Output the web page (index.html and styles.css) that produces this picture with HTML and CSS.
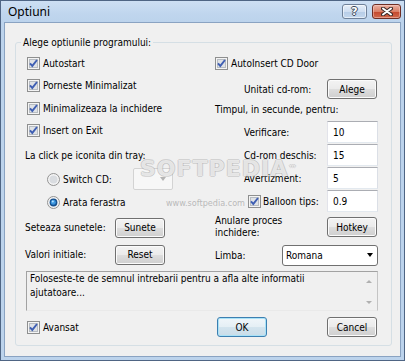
FILE: index.html
```html
<!DOCTYPE html>
<html>
<head>
<meta charset="utf-8">
<link rel="stylesheet" href="styles.css">
</head>
<body>
<div class="window">
  <div class="titlebar">
    <span class="title">Optiuni</span>
    <div class="tb-buttons">
      <div class="tb-btn help">?</div>
      <div class="tb-btn close">
        <svg width="12" height="9" viewBox="0 0 12 9"><path d="M2 1.5 L10 7.5 M10 1.5 L2 7.5" stroke="#3b2a28" stroke-width="4" stroke-linecap="round"/><path d="M2 1.5 L10 7.5 M10 1.5 L2 7.5" stroke="#ffffff" stroke-width="2" stroke-linecap="round"/></svg>
      </div>
    </div>
  </div>
  <div class="client">
    <fieldset class="group">
      <legend>Alege optiunile programului:</legend>
      <div class="cols">
        <div class="col">
          <div class="row"><span class="check ind2"><svg class="cb" viewBox="0 0 13 13"><rect x="0.5" y="0.5" width="12" height="12" fill="#f4f4f4" stroke="#8e8f8f"/><rect x="2.5" y="2.5" width="8" height="8" fill="#dfe2e6" stroke="#b7bcc2"/><path d="M3 6.3 L5.3 8.9 L10 3" fill="none" stroke="#3f5fb3" stroke-width="1.9"/></svg>Autostart</span></div>
          <div class="row"><span class="check ind2"><svg class="cb" viewBox="0 0 13 13"><rect x="0.5" y="0.5" width="12" height="12" fill="#f4f4f4" stroke="#8e8f8f"/><rect x="2.5" y="2.5" width="8" height="8" fill="#dfe2e6" stroke="#b7bcc2"/><path d="M3 6.3 L5.3 8.9 L10 3" fill="none" stroke="#3f5fb3" stroke-width="1.9"/></svg>Porneste Minimalizat</span></div>
          <div class="row"><span class="check ind2"><svg class="cb" viewBox="0 0 13 13"><rect x="0.5" y="0.5" width="12" height="12" fill="#f4f4f4" stroke="#8e8f8f"/><rect x="2.5" y="2.5" width="8" height="8" fill="#dfe2e6" stroke="#b7bcc2"/><path d="M3 6.3 L5.3 8.9 L10 3" fill="none" stroke="#3f5fb3" stroke-width="1.9"/></svg>Minimalizeaza la inchidere</span></div>
          <div class="row"><span class="check ind2"><svg class="cb" viewBox="0 0 13 13"><rect x="0.5" y="0.5" width="12" height="12" fill="#f4f4f4" stroke="#8e8f8f"/><rect x="2.5" y="2.5" width="8" height="8" fill="#dfe2e6" stroke="#b7bcc2"/><path d="M3 6.3 L5.3 8.9 L10 3" fill="none" stroke="#3f5fb3" stroke-width="1.9"/></svg>Insert on Exit</span></div>
          <div class="row sp2">La click pe iconita din tray:</div>
          <div class="row h25">
            <span class="radio-label"><svg class="rb" viewBox="0 0 13 13"><circle cx="6.5" cy="6.5" r="6" fill="#f3f3f3" stroke="#929292"/><circle cx="6.5" cy="6.5" r="4" fill="#d9dce0"/></svg>Switch CD:</span>
            <span class="combo-dis"><span class="combo-dis-arrow"></span></span>
          </div>
          <div class="row">
            <span class="radio-label"><svg class="rb" viewBox="0 0 13 13"><circle cx="6.5" cy="6.5" r="6" fill="#f3f3f3" stroke="#929292"/><circle cx="6.5" cy="6.5" r="3.9" fill="#15508f"/><circle cx="6.3" cy="6.2" r="2.5" fill="#3d97e0"/><circle cx="5.8" cy="5.6" r="1" fill="#b9e3ff"/></svg>Arata ferastra</span>
          </div>
          <div class="row h27"><span class="lbl-l">Seteaza sunetele:</span><span class="btn">Sunete</span></div>
          <div class="row h27"><span class="lbl-l">Valori initiale:</span><span class="btn">Reset</span></div>
        </div>
        <div class="col">
          <div class="row"><span class="check"><svg class="cb" viewBox="0 0 13 13"><rect x="0.5" y="0.5" width="12" height="12" fill="#f4f4f4" stroke="#8e8f8f"/><rect x="2.5" y="2.5" width="8" height="8" fill="#dfe2e6" stroke="#b7bcc2"/><path d="M3 6.3 L5.3 8.9 L10 3" fill="none" stroke="#3f5fb3" stroke-width="1.9"/></svg>AutoInsert CD Door</span></div>
          <div class="row h25 sp2"><span class="lbl-r">Unitati cd-rom:</span><span class="btn">Alege</span></div>
          <div class="row h16">Timpul, in secunde, pentru:</div>
          <div class="row h23 sp3"><span class="lbl-r">Verificare:</span><span class="edit">10</span></div>
          <div class="row h23"><span class="lbl-r">Cd-rom deschis:</span><span class="edit">15</span></div>
          <div class="row h23"><span class="lbl-r">Avertizment:</span><span class="edit">5</span></div>
          <div class="row h23"><span class="lbl-r balloon"><svg class="cb" viewBox="0 0 13 13"><rect x="0.5" y="0.5" width="12" height="12" fill="#f4f4f4" stroke="#8e8f8f"/><rect x="2.5" y="2.5" width="8" height="8" fill="#dfe2e6" stroke="#b7bcc2"/><path d="M3 6.3 L5.3 8.9 L10 3" fill="none" stroke="#3f5fb3" stroke-width="1.9"/></svg>Balloon tips:</span><span class="edit">0.9</span></div>
          <div class="row h29"><span class="lbl-two">Anulare proces<br>inchidere:</span><span class="btn">Hotkey</span></div>
          <div class="row h27"><span class="lbl-limba">Limba:</span><span class="combo"><span>Romana</span><span class="combo-arrow"></span></span></div>
        </div>
      </div>
      <div class="memo">
        <div class="memo-text">Foloseste-te de semnul intrebarii pentru a afla alte informatii ajutatoare...</div>
        <div class="memo-scroll"><span class="arr-up"></span><span class="arr-down"></span></div>
      </div>
      <div class="bottom">
        <span class="check ind2 bottom-check"><svg class="cb" viewBox="0 0 13 13"><rect x="0.5" y="0.5" width="12" height="12" fill="#f4f4f4" stroke="#8e8f8f"/><rect x="2.5" y="2.5" width="8" height="8" fill="#dfe2e6" stroke="#b7bcc2"/><path d="M3 6.3 L5.3 8.9 L10 3" fill="none" stroke="#3f5fb3" stroke-width="1.9"/></svg>Avansat</span>
        <span class="btn default">OK</span>
        <span class="btn cancel">Cancel</span>
      </div>
    </fieldset>
  </div>
  <div class="watermark">SOFTPEDIA<span class="tm">™</span></div>
  <div class="watermark-url">www.softpedia.com</div>
</div>
</body>
</html>
```
FILE: styles.css
```css
* { box-sizing: border-box; }
html, body { margin: 0; padding: 0; }
body {
  width: 405px; height: 361px; overflow: hidden; background: #ffffff;
  font-family: "DejaVu Sans Condensed", "DejaVu Sans", sans-serif;
  font-stretch: condensed;
  font-size: 10px; color: #000;
}
.window {
  position: relative;
  width: 405px; height: 361px;
  border: 1px solid #4f6584;
  background: #bcd3ec;
  padding: 0 3px 3px;
  display: flex; flex-direction: column;
}
.titlebar {
  height: 21px; flex: none;
  margin: 0 -3px;
  padding: 3px 3px 0 7px;
  display: flex; justify-content: space-between; align-items: flex-start;
  background: linear-gradient(180deg, #cddff3 0%, #c0d6ee 60%, #bcd3ec 100%);
}
.title {
  font-family: "Noto Sans", "Open Sans", sans-serif; font-stretch: normal;
  font-size: 12px; line-height: 16px; color: #000;
}
.tb-buttons { display: flex; gap: 5px; }
.tb-btn {
  height: 15px; border-radius: 3px;
  display: flex; align-items: center; justify-content: center;
}
.help {
  width: 25px;
  border: 1px solid #6f8199;
  background: linear-gradient(180deg, #e6eef8 0%, #cfdef1 50%, #b6cce6 51%, #c4d8ee 100%);
  box-shadow: inset 0 0 0 1px rgba(255,255,255,0.55);
  font-family: "DejaVu Sans", sans-serif; font-stretch: normal; font-weight: bold;
  font-size: 11px; color: #fff;
  text-shadow: 1px 0 #3e4a5a, -1px 0 #3e4a5a, 0 1px #3e4a5a, 0 -1px #3e4a5a;
}
.close {
  width: 29px;
  border: 1px solid #6e2e25;
  background: linear-gradient(180deg, #eab0a2 0%, #da8068 50%, #c4462c 51%, #d06a4e 100%);
  box-shadow: inset 0 0 0 1px rgba(255,220,210,0.45);
}
.client {
  flex: 1;
  border: 1px solid #8aa3c2;
  background: #f0f0f0;
  padding: 13px 8px 10px 10px;
  display: flex; flex-direction: column;
}
.group {
  flex: 1; margin: 0;
  border: 1px solid #d5dfe5;
  border-radius: 3px;
  padding: 3px 11px 0 9px;
  min-width: 0;
}
.group legend {
  padding: 0 2px; margin-left: -4px;
  line-height: 13px;
}
.cols { display: grid; grid-template-columns: 190px 163px; }
.col { display: flex; flex-direction: column; }
.row { height: 22.5px; display: flex; align-items: center; white-space: nowrap; }
.h16 { height: 16px; }
.h23 { height: 23px; }
.h25 { height: 25px; }
.h27 { height: 27px; }
.h29 { height: 29px; }
.sp2 { margin-top: 2px; }
.sp3 { margin-top: 3px; }
.check { display: flex; align-items: center; gap: 3px; }
.ind2 { margin-left: 2px; }
.cb { width: 13px; height: 13px; flex: none; }
.rb { width: 13px; height: 13px; flex: none; }
.radio-label { display: flex; align-items: center; gap: 3px; margin-left: 22px; width: 86px; }
.combo-dis {
  width: 40px; height: 22px;
  border: 1px solid #d3d3d3; border-radius: 2px;
  background: #f7f7f7;
  display: flex; align-items: center; justify-content: flex-end; padding-right: 6px;
}
.combo-dis-arrow {
  width: 0; height: 0;
  border-left: 3.5px solid transparent; border-right: 3.5px solid transparent;
  border-top: 4px solid #b4b4b4;
}
.lbl-l { width: 90px; }
.lbl-r { margin-left: 29px; width: 83px; }
.balloon { display: flex; align-items: center; gap: 2px; margin-left: 33px; width: 79px; }
.lbl-two { width: 112px; line-height: 12.5px; white-space: normal; }
.lbl-limba { width: 67px; }
.btn {
  width: 50px; height: 20px; flex: none;
  border: 1px solid #707070; border-radius: 3px;
  background: linear-gradient(180deg, #f3f3f3 0%, #ebebeb 48%, #dddddd 52%, #cfcfcf 100%);
  box-shadow: inset 0 0 0 1px #fbfbfb;
  display: flex; align-items: center; justify-content: center;
}
.edit {
  width: 51px; height: 22px; flex: none;
  background: #fff;
  border: 1px solid; border-color: #abadb3 #dbdfe6 #e3e9ef #e2e3ea;
  padding-left: 5px;
  display: flex; align-items: center;
}
.combo {
  width: 96px; height: 21px; flex: none;
  border: 1px solid #707070; border-radius: 3px;
  background: #fff;
  padding: 0 4px 0 3px;
  display: flex; align-items: center; justify-content: space-between;
}
.combo-arrow {
  width: 0; height: 0;
  border-left: 3.5px solid transparent; border-right: 3.5px solid transparent;
  border-top: 4px solid #000;
}
.memo {
  margin: 2px 0 0 1px; width: 352px; height: 40px;
  border: 1px solid; border-color: #a2a2a2 #c4c4c4 #e9e9e9 #a2a2a2;
  background: #f0f0f0;
  display: flex;
}
.memo-text { flex: 1; padding: 0 0 0 3px; line-height: 14px; }
.memo-scroll {
  width: 17px; flex: none;
  display: flex; flex-direction: column; justify-content: space-between; align-items: center;
  padding: 8px 0 6px;
}
.arr-up, .arr-down {
  width: 0; height: 0;
  border-left: 3px solid transparent; border-right: 3px solid transparent;
}
.arr-up { border-bottom: 3px solid #b0b0b0; }
.arr-down { border-top: 3px solid #b0b0b0; }
.bottom { margin-top: 6px; height: 21px; display: flex; align-items: center; }
.bottom-check { width: 190px; }
.default {
  border-color: #3c7fb1;
  background: linear-gradient(180deg, #f0f6fa 0%, #e5eff5 48%, #d3e4ee 52%, #c9dce8 100%);
  box-shadow: inset 0 0 0 1px #a9e2f7;
}
.cancel { margin-left: 60px; }
.watermark {
  position: absolute; left: 139px; top: 158px;
  font-family: "DejaVu Sans", sans-serif; font-stretch: normal; font-weight: bold;
  font-size: 22px; letter-spacing: 1px; line-height: 20px;
  color: rgba(255,255,255,0.7);
  text-shadow: 1px 0 rgba(160,160,160,0.4), -1px 0 rgba(160,160,160,0.4), 0 1px rgba(160,160,160,0.4), 0 -1px rgba(160,160,160,0.4);
  pointer-events: none;
}
.watermark .tm { font-size: 8px; vertical-align: top; letter-spacing: 0; }
.watermark-url {
  position: absolute; left: 165px; top: 197px;
  font-size: 9px; line-height: 10px; color: rgba(170,170,170,0.8);
  pointer-events: none;
}
```
